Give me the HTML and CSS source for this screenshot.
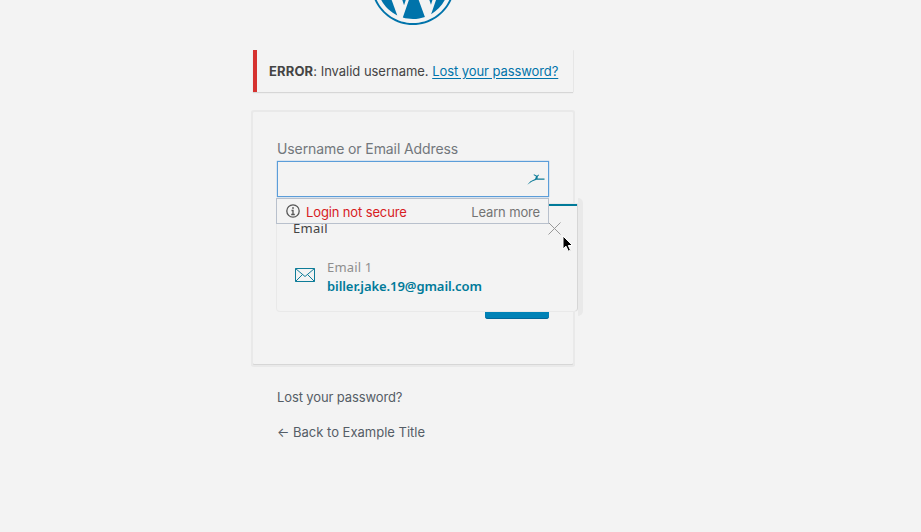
FILE: index.html
```html
<!DOCTYPE html>
<html lang="en">
<head>
<meta charset="utf-8">
<title>Log In</title>
<link rel="stylesheet" href="styles.css">
</head>
<body>
<main class="login">
  <svg class="logo" viewBox="0 0 122.52 122.523" aria-hidden="true">
    <path d="M8.708,61.26c0,20.802,12.089,38.779,29.619,47.298L13.258,39.872C10.342,46.408,8.708,53.641,8.708,61.26z"/>
    <path d="M96.74,58.608c0-6.495-2.333-10.993-4.334-14.494c-2.664-4.329-5.161-7.995-5.161-12.324c0-4.831,3.664-9.328,8.825-9.328c0.233,0,0.454,0.029,0.681,0.042c-9.35-8.566-21.807-13.796-35.489-13.796c-18.36,0-34.513,9.42-43.91,23.688c1.233,0.037,2.395,0.063,3.382,0.063c5.497,0,14.006-0.667,14.006-0.667c2.833-0.167,3.167,3.994,0.337,4.329c0,0-2.847,0.335-6.015,0.501L48.2,93.547l11.501-34.493l-8.188-22.434c-2.83-0.166-5.511-0.501-5.511-0.501c-2.832-0.166-2.5-4.496,0.332-4.329c0,0,8.679,0.667,13.843,0.667c5.496,0,14.006-0.667,14.006-0.667c2.835-0.167,3.168,3.994,0.337,4.329c0,0-2.853,0.335-6.015,0.501l18.992,56.494l5.242-17.517C95.011,68.328,96.74,62.9,96.74,58.608z"/>
    <path d="M62.184,65.857l-15.768,45.819c4.708,1.384,9.687,2.141,14.846,2.141c6.12,0,11.989-1.058,17.452-2.979c-0.141-0.225-0.269-0.464-0.374-0.724L62.184,65.857z"/>
    <path d="M107.376,36.046c0.226,1.674,0.354,3.471,0.354,5.404c0,5.333-0.996,11.328-3.996,18.824l-16.053,46.413c15.624-9.111,26.133-26.038,26.133-45.426C113.815,52.124,111.481,43.532,107.376,36.046z"/>
    <path d="M61.262,0C27.483,0,0,27.481,0,61.26c0,33.783,27.483,61.263,61.262,61.263c33.778,0,61.265-27.48,61.265-61.263C122.526,27.481,95.04,0,61.262,0z M61.262,119.715c-32.23,0-58.453-26.223-58.453-58.455c0-32.23,26.222-58.451,58.453-58.451c32.229,0,58.45,26.221,58.45,58.451C119.712,93.492,93.491,119.715,61.262,119.715z"/>
  </svg>
  <div class="error"><span class="error-text"><strong>ERROR</strong>: <span class="reason">Invalid username.</span> <a href="#">Lost your password?</a></span></div>
  <form class="card">
    <label class="label" for="user">Username or Email Address</label>
    <div class="field">
      <input class="input" id="user" type="text">
      <svg class="field-icon" viewBox="0 0 18 14" aria-hidden="true">
        <path d="M.3 12.800 3.500 9.200 8 7 9 4.600 6.500 3 7 2.200 10 3.700 11.500 2.500 12 3.200 10.800 4.600 10.500 6.500H17.500V7.700H9.500L5 9.600z"/>
      </svg>
      <div class="popup">
        <span class="popup-title">Email</span>
        <svg class="close" viewBox="0 0 13 13" aria-hidden="true"><path d="M.5.5l12 12M12.500.5l-12 12"/></svg>
        <div class="entry">
          <svg class="mail" viewBox="0 0 20 14" aria-hidden="true"><path d="M.5.5h19v13H.5zM.5.5 10 8.500l9.500-8M.5 13.500l7-7M19.500 13.500l-7-7"/></svg>
          <div class="entry-text">
            <span class="entry-name">Email 1</span>
            <span class="entry-mail">biller.jake.19@gmail.com</span>
          </div>
        </div>
      </div>
      <div class="warning">
        <svg class="info" viewBox="0 0 14 14" aria-hidden="true"><circle cx="7" cy="7" r="6.200"/><path d="M7 3v2M5.500 6.500H7v4M5.200 10.500h3.600"/></svg>
        <span class="warning-text">Login not secure</span>
        <span class="warning-more">Learn more</span>
      </div>
      <svg class="cursor" viewBox="0 0 12 18" aria-hidden="true"><path d="M1 1v13l3-2.800 2.300 5 2.200-1-2.200-4.700h4.200z"/></svg>
    </div>
    <button class="submit" type="button" aria-label="Log In"></button>
  </form>
  <nav class="links">
    <a class="link" href="#">Lost your password?</a>
    <a class="link link-back" href="#"><span class="arrow">←</span>Back to Example Title</a>
  </nav>
</main>
</body>
</html>
```
FILE: styles.css
```css
* { box-sizing: border-box; }

body {
  margin: 0;
  height: 532px;
  overflow: hidden;
  background: #f3f3f3;
  color: #444;
  font: 13px/18px Inter, "Liberation Sans", sans-serif;
}

.login { width: 320px; margin-left: 253px; }

.logo {
  display: block;
  width: 84px;
  height: 84px;
  margin: -59px auto 25px 118px;
  fill: #0073aa;
}

.error {
  display: flex;
  align-items: center;
  height: 42px;
  padding-left: 12px;
  border-left: 4px solid #d63230;
  box-shadow: 0 1px 1px #d6d6d6, 1px 0 0 #eaeaea;
}
.error-text { white-space: nowrap; }
.error strong { letter-spacing: 0.15px; }
.reason { letter-spacing: -0.03px; }
.error a { color: #0073aa; letter-spacing: -0.08px; text-underline-offset: 2px; }

.card {
  height: 252px;
  margin-top: 20px;
  padding: 28px 24px 0;
  box-shadow: 0 1px 0 #d6d6d6, 0 0 0 2px #e9e9e9, 0 1px 0 2px #e9e9e9;
  border-radius: 1px;
}
.label { display: block; height: 21px; font-size: 14px; line-height: 18px; letter-spacing: -0.1px; color: #72777c; white-space: nowrap; }

.field { position: relative; width: 272px; height: 36px; }
.input {
  display: block;
  width: 272px;
  height: 36px;
  padding: 0 30px 0 8px;
  border: 1px solid #5b9dd9;
  border-radius: 0;
  outline: none;
  background: #f3f3f3;
  box-shadow: 0 0 1px #5b9dd9;
}
.field-icon { position: absolute; left: 250px; top: 11px; width: 18px; height: 14px; fill: #0e7c98; }

.popup {
  position: absolute;
  left: 0;
  top: 43px;
  width: 300px;
  height: 107px;
  padding: 13px 16px;
  border-top: 2px solid #007a99;
  border-radius: 0 0 3px 3px;
  background: #f3f3f3;
  box-shadow: 1px 0 0 #d6d6d6, 0 0 0 1px #e9e9e9;
  font-family: "Noto Sans", sans-serif;
}
.popup::after {
  content: "";
  position: absolute;
  left: 301px;
  top: -8px;
  width: 5px;
  height: 118px;
  border-radius: 0 6px 6px 0;
  background: #e9e9e9;
}
.popup-title { display: block; color: #444; line-height: 18px; letter-spacing: 0.3px; }
.close { position: absolute; right: 16px; top: 16px; width: 13px; height: 13px; fill: none; stroke: #999; }
.entry { display: flex; gap: 12px; margin-top: 21px; padding-left: 2px; }
.mail { width: 20px; height: 14px; margin-top: 10px; fill: none; stroke: #0e7c98; }
.entry-text { display: flex; flex-direction: column; line-height: 19px; }
.entry-name { color: #8e8e8e; letter-spacing: 0.15px; }
.entry-mail { color: #007a99; font-weight: 600; letter-spacing: -0.08px; }

.warning {
  position: absolute;
  left: -1px;
  top: 37px;
  display: flex;
  align-items: center;
  width: 273px;
  height: 26px;
  padding: 2px 8px 0 9px;
  border: 1px solid #b8c0cc;
  background: #f3f3f3;
  white-space: nowrap;
}
.info { width: 14px; height: 14px; margin: -3px 6px 0 0; fill: none; stroke: #555; stroke-width: 1.3; }
.warning-text { color: #d7201f; letter-spacing: -0.13px; }
.warning-more { margin-left: auto; color: #737373; letter-spacing: -0.15px; }

.cursor { position: absolute; left: 285px; top: 74px; width: 12px; height: 18px; stroke: #fff; fill: #000; }

.submit {
  display: block;
  width: 64px;
  height: 33px;
  margin: 89px 0 0 auto;
  padding: 0;
  border: 0;
  border-radius: 3px;
  background: #0082b6;
  box-shadow: inset 0 -1px 0 #006799;
}

.links { display: flex; flex-direction: column; gap: 17px; padding: 24px 24px 0; }
.link { color: #555d66; letter-spacing: -0.12px; text-decoration: none; white-space: nowrap; }
.link-back { letter-spacing: 0; }
.arrow { display: inline-block; width: 16px; }
```
